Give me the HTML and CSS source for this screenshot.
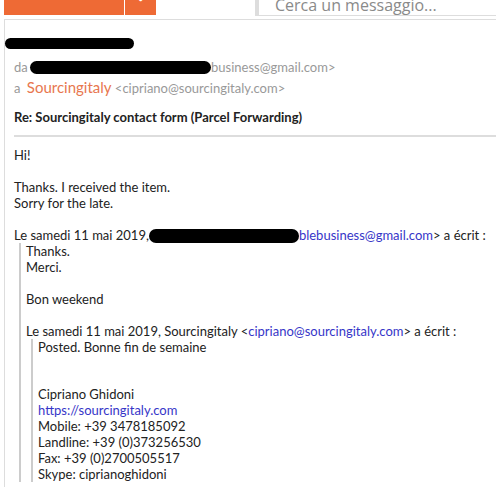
FILE: index.html
```html
<!DOCTYPE html>
<html lang="it">
<head>
    <meta charset="UTF-8">
    <meta name="viewport" content="width=device-width, initial-scale=1.0">
    <title>Posta</title>
    <link rel="stylesheet" href="styles.css">
</head>
<body>
    <div class="topbar">
        <div class="new-mail">
            <button class="btn-main">NUOVA EMAIL</button>
            <button class="btn-more">&#8964;</button>
        </div>
        <div class="search">Cerca un messaggio...</div>
    </div>

    <div class="mail">
        <div class="redact redact-name"></div>

        <div class="meta">da <span class="redact redact-from"></span>business@gmail.com&gt;</div>
        <div class="meta">a <span class="sender">Sourcingitaly</span> &lt;cipriano@sourcingitaly.com&gt;</div>

        <div class="subject">Re: Sourcingitaly contact form (Parcel Forwarding)</div>

        <div class="body">
            <p>Hi!</p>
            <p class="blank"></p>
            <p>Thanks. I received the item.</p>
            <p>Sorry for the late.</p>
            <p class="blank"></p>
            <p>Le samedi 11 mai 2019,<span class="redact redact-quote"></span><a href="#">blebusiness@gmail.com</a>&gt; a écrit :</p>
            <blockquote>
                <p>Thanks.</p>
                <p>Merci.</p>
                <p class="blank"></p>
                <p>Bon weekend</p>
                <p class="blank"></p>
                <p>Le samedi 11 mai 2019, Sourcingitaly &lt;<a href="#">cipriano@sourcingitaly.com</a>&gt; a écrit :</p>
                <blockquote>
                    <p>Posted. Bonne fin de semaine</p>
                    <div class="gap"></div>
                    <p>Cipriano Ghidoni</p>
                    <p><a href="#">https://sourcingitaly.com</a></p>
                    <p>Mobile: +39 3478185092</p>
                    <p>Landline: +39 (0)373256530</p>
                    <p>Fax: +39 (0)2700505517</p>
                    <p>Skype: ciprianoghidoni</p>
                </blockquote>
            </blockquote>
        </div>
    </div>
</body>
</html>
```

FILE: styles.css
```css
body {
    margin: 0;
    height: 100vh;
    display: flex;
    flex-direction: column;
    font-family: Lato, "Open Sans", sans-serif;
    background: #fff;
    color: #222;
    overflow: hidden;
}
.topbar {
    display: flex;
    align-items: flex-start;
    height: 19px;
    flex-shrink: 0;
    padding-left: 4px;
}
.new-mail {
    display: flex;
    margin-top: -25px;
}
.new-mail button {
    height: 40px;
    border: none;
    background: #ee6a35;
    color: #fff;
    font-family: "Liberation Sans", Arial, sans-serif;
    font-weight: bold;
    font-size: 16px;
    padding: 0;
}
.btn-main {
    width: 120px;
}
.btn-more {
    width: 31px;
    margin-left: 1px;
    font-size: 12px;
}
.search {
    margin-left: 99px;
    flex: 1;
    height: 15px;
    border-left: 4px solid #ddd;
    border-bottom: 1px solid #ddd;
    overflow: hidden;
    padding-left: 16px;
    color: #8a8a8a;
    font-family: "Open Sans", sans-serif;
    font-size: 16px;
    line-height: 10px;
}
.mail {
    flex: 1;
    margin-left: 4px;
    border-top: 1px solid #ddd;
    border-left: 1px solid #ddd;
    padding: 18px 0 0 9px;
}
.redact {
    display: inline-block;
    background: #000;
    border-radius: 7px;
    vertical-align: middle;
}
.redact-name {
    display: block;
    width: 129px;
    height: 11px;
    margin-left: -9px;
    margin-bottom: 8px;
}
.meta {
    color: #999;
    font-size: 13px;
    line-height: 20px;
}
.redact-from {
    width: 181px;
    height: 13px;
    margin: -2px 0 0 -1px;
}
.sender {
    color: #e8774f;
    font-size: 15px;
    margin-left: 3px;
}
.subject {
    font-weight: bold;
    font-size: 13px;
    margin-top: 11px;
    line-height: 16px;
    padding-bottom: 10px;
    border-bottom: 2px solid #ddd;
}
.body {
    padding-top: 10px;
    font-size: 13px;
    line-height: 16px;
}
.body p {
    margin: 0;
    white-space: nowrap;
}
.body .blank {
    height: 16px;
}
.body a {
    color: #3636c8;
    text-decoration: none;
}
.redact-quote {
    width: 150px;
    height: 14px;
    margin-top: -2px;
}
blockquote {
    margin: 0 0 0 5px;
    padding-left: 5px;
    border-left: 2px solid #ccc;
}
.gap {
    height: 31px;
}
```
